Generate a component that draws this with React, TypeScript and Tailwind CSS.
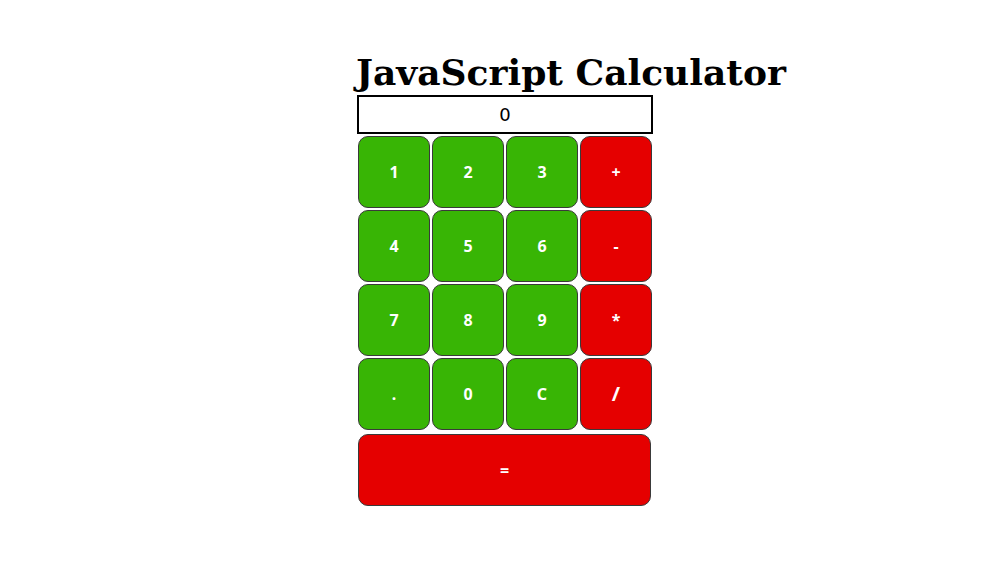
import React from "react";

const rows = [
  ["1", "2", "3", "+"],
  ["4", "5", "6", "-"],
  ["7", "8", "9", "*"],
  [".", "0", "C", "/"],
];
const ops = ["+", "-", "*", "/"];

export default function App() {
  return (
    <div className="w-[1004px] h-[564px] bg-white pl-[357px] pt-[50px]">
      <h1
        className="text-[36px] leading-[45px] font-bold text-black whitespace-nowrap -ml-[1px]"
        style={{ fontFamily: '"DejaVu Serif", serif' }}
      >
        JavaScript Calculator
      </h1>
      <div className="w-[296px]">
        <div
          className="w-[296px] h-[39px] border-2 border-black flex items-center justify-center text-[18px] text-black"
          style={{ fontFamily: '"DejaVu Sans", sans-serif' }}
        >
          0
        </div>
        <div className="flex flex-col pt-[1px]" style={{ fontFamily: '"Noto Sans", sans-serif' }}>
          {rows.map((r, i) => (
            <div key={i} className="flex">
              {r.map((k) => (
                <div
                  key={k}
                  className={`m-[1px] w-[72px] h-[72px] rounded-[10px] border border-[#3a3a3a] flex items-center justify-center text-white font-bold ${
                    ops.includes(k) ? "bg-[#e50000]" : "bg-[#38b505]"
                  } ${k === "/" ? "text-[20px]" : "text-[16px]"}`}
                >
                  {k}
                </div>
              ))}
            </div>
          ))}
          <div className="mt-[3px] ml-[1px] w-[293px] h-[72px] rounded-[10px] border border-[#3a3a3a] bg-[#e50000] flex items-center justify-center text-white font-bold text-[16px]">
            =
          </div>
        </div>
      </div>
    </div>
  );
}
